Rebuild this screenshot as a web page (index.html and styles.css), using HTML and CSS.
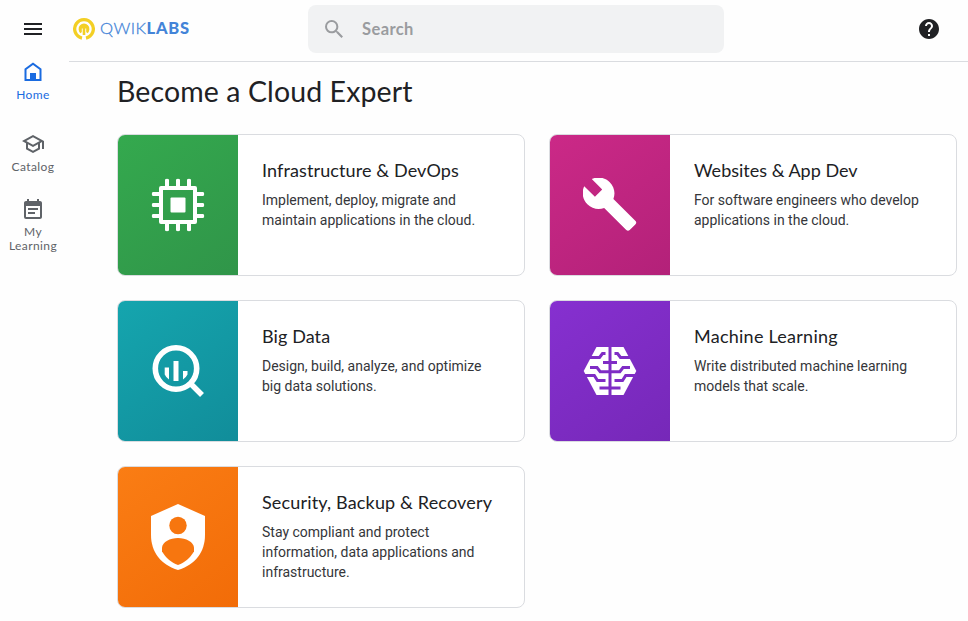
FILE: index.html
```html
<!DOCTYPE html>
<html lang="en">
<head>
<meta charset="utf-8">
<title>Qwiklabs</title>
<link rel="stylesheet" href="styles.css">
</head>
<body>
<header class="topbar">
  <button class="menu" aria-label="Menu"><svg width="18" height="12" viewBox="0 0 18 12"><path d="M0 0h18v2H0zM0 5h18v2H0zM0 10h18v2H0z" fill="#202124"/></svg></button>
  <div class="topbar-main">
    <a class="logo">
      <svg width="22" height="22" viewBox="0 0 22 22"><path d="M9 20.100A9.300 9.300 0 1 1 13 20.100" fill="none" stroke="#f3cf24" stroke-width="3.300"/><path d="M7.600 15.200A5.400 5.400 0 1 1 14.400 15.200L13.200 14V10.500H12.300V17H9.700V10.500H8.800V14z" fill="#f3cf24"/></svg>
      <span class="wordmark"><span class="thin">QWIK</span><b>LABS</b></span>
    </a>
    <label class="search">
      <svg width="18" height="18" viewBox="3 3 17.500 17.500"><path fill="#9a9c9f" d="M15.500 14h-.79l-.28-.27A6.471 6.471 0 0 0 16 9.500 6.500 6.500 0 1 0 9.500 16c1.610 0 3.090-.59 4.230-1.570l.27.28v.79l5 4.990L20.490 19l-4.990-5zm-6 0C7.010 14 5 11.990 5 9.500S7.010 5 9.500 5 14 7.010 14 9.500 11.990 14 9.500 14z"/></svg>
      <span>Search</span>
    </label>
    <svg class="help" width="24" height="24" viewBox="0 0 24 24"><path fill="#202124" d="M12 2C6.480 2 2 6.480 2 12s4.480 10 10 10 10-4.480 10-10S17.520 2 12 2zm1 17h-2v-2h2v2zm2.070-7.750l-.9.920C13.450 12.900 13 13.500 13 15h-2v-.5c0-1.100.45-2.100 1.170-2.830l1.240-1.260c.37-.36.590-.86.590-1.410 0-1.100-.9-2-2-2s-2 .9-2 2H8c0-2.210 1.790-4 4-4s4 1.790 4 4c0 .88-.36 1.680-.93 2.250z"/></svg>
  </div>
</header>
<div class="body">
  <nav class="rail">
    <a class="item active"><svg width="24" height="24" viewBox="0 0 24 24"><path fill="none" stroke="#1a6be0" stroke-width="2" d="M4.500 20V9.300L12 3.700l7.500 5.600V20z"/><path fill="#1a6be0" d="M9 13h6v8H9z"/></svg><span>Home</span></a>
    <a class="item"><svg width="24" height="24" viewBox="0 0 24 24"><path fill="#5f6368" d="M12 3L1 9l4 2.180v6L12 21l7-3.820v-6l2-1.090V17h2V9L12 3zm6.820 6L12 12.720 5.180 9 12 5.280 18.820 9zM17 15.990l-5 2.730-5-2.730v-3.720L12 15l5-2.730v3.720z"/></svg><span>Catalog</span></a>
    <a class="item learning"><svg width="24" height="24" viewBox="0 0 24 24"><path fill="#5f6368" d="M17 11H7v2h10v-2zm2-7h-1V2h-2v2H8V2H6v2H5c-1.110 0-1.990.9-1.990 2L3 20a2 2 0 0 0 2 2h14c1.100 0 2-.9 2-2V6c0-1.100-.9-2-2-2zm0 16H5V9h14v11zm-5-5H7v2h7v-2z"/></svg><span>My<br>Learning</span></a>
  </nav>
  <main>
    <h1>Become a Cloud Expert</h1>
    <div class="grid">
      <article class="card">
        <div class="art green"><svg width="54" height="54" viewBox="0 0 54 54"><path fill="none" stroke="#fff" stroke-width="4" stroke-linejoin="round" d="M10 10h34v34H10z"/><g fill="#fff"><rect x="19.500" y="19.500" width="15" height="15" rx="1"/><path d="M14 1.500q2-1.500 4 0V9h-4zM25 1.500q2-1.500 4 0V9h-4zM36 1.500q2-1.500 4 0V9h-4zM14 45h4v7.500q-2 1.500-4 0zM25 45h4v7.500q-2 1.500-4 0zM36 45h4v7.500q-2 1.500-4 0zM1.500 14H9v4H1.500q-1.500-2 0-4zM1.500 25H9v4H1.500q-1.500-2 0-4zM1.500 36H9v4H1.500q-1.500-2 0-4zM45 14h7.500q1.500 2 0 4H45zM45 25h7.500q1.500 2 0 4H45zM45 36h7.500q1.500 2 0 4H45z"/></g></svg></div>
        <div class="copy"><h2 class="t1">Infrastructure &amp; DevOps</h2><p>Implement, deploy, migrate and maintain applications in the cloud.</p></div>
      </article>
      <article class="card">
        <div class="art pink"><svg width="54" height="54" viewBox="1.100 1.300 22.200 22.200"><path fill="#fff" d="M22.700 19l-9.100-9.100c.9-2.300.4-5-1.500-6.900-2-2-5-2.400-7.400-1.300L9 6 6 9 1.600 4.700C.4 7.100.9 10.100 2.900 12.100c1.900 1.900 4.600 2.400 6.900 1.500l9.100 9.100c.4.400 1 .4 1.400 0l2.300-2.300c.5-.4.5-1.100.1-1.400z"/></svg></div>
        <div class="copy"><h2 class="t2">Websites &amp; App Dev</h2><p>For software engineers who develop applications in the cloud.</p></div>
      </article>
      <article class="card">
        <div class="art teal"><svg width="54" height="54" viewBox="0 0 54 54"><circle cx="25" cy="24.500" r="20.700" fill="none" stroke="#fff" stroke-width="5.600"/><path stroke="#fff" stroke-width="5.500" d="M39 39l12 12"/><path fill="#fff" d="M13.700 23.500h4.300v12q-2.800-1.800-4.300-5zM22.500 17h5v20h-5zM32 27h4.500v3.500q-1.500 3-4.500 5z"/></svg></div>
        <div class="copy"><h2 class="t3">Big Data</h2><p>Design, build, analyze, and optimize big data solutions.</p></div>
      </article>
      <article class="card">
        <div class="art purple"><svg width="54" height="54" viewBox="0 0 54 54"><path fill="#fff" d="M13.500 3H25.500v48H13.500L.7 27z"/><path fill="#fff" d="M28.500 3H40.500L53.300 27 40.500 51H28.500z"/><g fill="none" stroke="#7f2cc5" stroke-width="3"><path d="M6 13.500h10.500l3-4h3M7 23.500h7l3.200 4.200H26M0 31.500h11.300l3.200 5H22.500"/><path d="M48 13.500H37.500l-3-4h-3M47 23.500h-7l-3.200 4.200H28M54 31.500H42.700l-3.200 5H31.500"/><path d="M20 18.500h14M16.500 44h21"/></g></svg></div>
        <div class="copy"><h2 class="t4">Machine Learning</h2><p>Write distributed machine learning models that scale.</p></div>
      </article>
      <article class="card">
        <div class="art orange"><svg width="54" height="66" viewBox="0 0 54 66"><path fill="#fff" d="M27 0l27 12v19c0 17-10 30-27 35C10 61 0 48 0 31V12z"/><circle cx="27" cy="21.500" r="8.700" fill="#f7760f"/><path fill="#f7760f" d="M27 34c8 0 15.500 4 16 9.500v4C39 54 34 58.500 27 61c-7-2.500-12-7-16-13.500v-4C11.500 38 19 34 27 34z"/></svg></div>
        <div class="copy"><h2 class="t5">Security, Backup &amp; Recovery</h2><p>Stay compliant and protect information, data applications and infrastructure.</p></div>
      </article>
    </div>
  </main>
</div>
</body>
</html>
```
FILE: styles.css
```css
* { box-sizing: border-box; }
body { margin: 0; width: 968px; height: 621px; overflow: hidden; background: #fefefe; color: #202124; font-family: Lato, "Liberation Sans", sans-serif; }
svg { display: block; flex: none; }
.topbar { display: flex; height: 62px; }
.menu { width: 69px; padding: 3px 0 8px 24px; border: 0; background: none; display: flex; align-items: center; }
.topbar-main { flex: 1; display: flex; align-items: flex-start; border-bottom: 1px solid #dadce0; }
.logo { display: flex; width: 239px; padding: 18px 0 0 4px; gap: 5px; color: #4384d8; }
.wordmark { font-size: 16.500px; line-height: 21px; letter-spacing: .5px; white-space: nowrap; }
.thin { font-weight: 300; -webkit-text-stroke: .3px currentColor; }
.wordmark b { font-weight: 900; letter-spacing: .75px; }
.search { width: 416px; height: 48px; margin-top: 5px; border-radius: 8px; background: #f1f2f3; display: flex; align-items: center; padding-left: 17px; gap: 19px; color: #9a9c9f; font-size: 16.500px; font-weight: 700; letter-spacing: .4px; }
.help { margin: 17px 0 0 193px; }
.body { display: flex; }
.rail { width: 66px; flex: none; margin-top: -2px; }
.item { display: flex; flex-direction: column; align-items: center; height: 72px; text-align: center; font-size: 12px; line-height: 14px; letter-spacing: .4px; color: #5f6368; gap: 4px; }
.item.active { color: #1a6be0; }
.item.learning { margin-top: -7px; }
main { padding: 10px 0 0 51px; }
h1 { margin: 0; height: 62px; font-size: 28.500px; letter-spacing: .1px; font-weight: 400; line-height: 38px; white-space: nowrap; }
.grid { display: grid; grid-template-columns: 408px 408px; grid-auto-rows: 142px; gap: 24px; }
.card { display: flex; border: 1px solid #dadce0; border-radius: 8px; overflow: hidden; background: #fff; }
.art { width: 120px; flex: none; display: flex; align-items: center; justify-content: center; }
.green { background: linear-gradient(145deg, #34a94e, #309549); }
.pink { background: linear-gradient(145deg, #cb2987, #b32179); }
.teal { background: linear-gradient(145deg, #15a5ae, #118d9a); }
.purple { background: linear-gradient(145deg, #8630d0, #7628b8); }
.orange { background: linear-gradient(145deg, #fa7d14, #f26c08); }
.copy { padding: 23px 24px; }
h2 { margin: 0 0 8px; font-size: 18px; line-height: 24px; font-weight: 400; white-space: nowrap; }
.t1 { letter-spacing: .11px; }
.t3 { letter-spacing: .1px; }
.t4 { letter-spacing: .25px; }
.t5 { letter-spacing: .16px; }
p { margin: 0; width: 236px; font: 14px/20px Roboto, sans-serif; color: #35363a; }
```
